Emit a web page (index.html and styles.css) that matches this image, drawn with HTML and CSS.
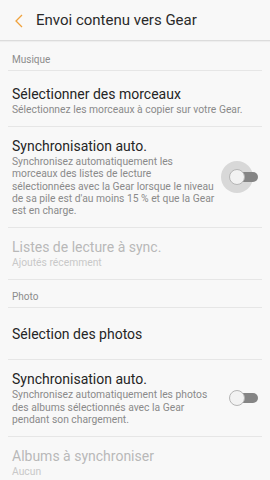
FILE: index.html
```html
<!DOCTYPE html>
<html lang="fr">
<head>
    <meta charset="UTF-8">
    <meta name="viewport" content="width=device-width, initial-scale=1.0">
    <title>Envoi contenu vers Gear</title>
    <link rel="stylesheet" href="styles.css">
</head>
<body>

<div class="header">
    <svg class="back" width="10" height="14" viewBox="0 0 10 14"><path d="M8 1 L2 7 L8 13" fill="none" stroke="#f0a23c" stroke-width="1.3"/></svg>
    <span class="title">Envoi contenu vers Gear</span>
</div>

<div class="list">
    <div class="category first">Musique</div>

    <div class="item first">
        <div class="item-title">Sélectionner des morceaux</div>
        <div class="item-sub">Sélectionnez les morceaux à copier sur votre Gear.</div>
    </div>

    <div class="item row">
        <div class="text">
            <div class="item-title">Synchronisation auto.</div>
            <div class="item-sub">Synchronisez automatiquement les morceaux des listes de lecture sélectionnées avec la Gear lorsque le niveau de sa pile est d'au moins 15 % et que la Gear est en charge.</div>
        </div>
        <div class="switch pressed"><span class="track"></span><span class="knob"></span></div>
    </div>

    <div class="item disabled">
        <div class="item-title">Listes de lecture à sync.</div>
        <div class="item-sub">Ajoutés récemment</div>
    </div>

    <div class="category">Photo</div>

    <div class="item single">
        <div class="item-title">Sélection des photos</div>
    </div>

    <div class="item row">
        <div class="text">
            <div class="item-title">Synchronisation auto.</div>
            <div class="item-sub">Synchronisez automatiquement les photos des albums sélectionnés avec la Gear pendant son chargement.</div>
        </div>
        <div class="switch"><span class="track"></span><span class="knob"></span></div>
    </div>

    <div class="item disabled last">
        <div class="item-title">Albums à synchroniser</div>
        <div class="item-sub">Aucun</div>
    </div>
</div>

</body>
</html>
```

FILE: styles.css
```css
body { margin: 0; background: #f8f8f8; font-family: Roboto, "Noto Sans", sans-serif; color: #252525; overflow: hidden; }

.header { height: 40px; display: flex; align-items: center; padding-left: 14px; border-bottom: 1px solid #dcdcdc; box-shadow: 0 1px 1px rgba(0,0,0,0.04); }
.back { margin-top: 1px; }
.title { font-size: 15px; margin-left: 12px; color: #2a2a2a; }

.list { padding: 0 8px; }
.category { font-size: 10px; line-height: 12px; color: #8c8c8c; padding: 11px 4px 4px; border-bottom: 1px solid #e6e6e6; }
.category.first { padding-top: 13px; }

.item { padding: 10px 4px; border-bottom: 1px solid #e6e6e6; }
.item.first { padding-top: 14px; }
.item.single { padding: 17px 4px 16px; }
.item.last { border-bottom: none; }
.item-title { font-size: 14px; line-height: 18px; }
.item-sub { font-size: 10.3px; line-height: 12.2px; color: #8a8a8a; margin-top: 1px; }

.item.disabled .item-title { color: #b8b8b8; }
.item.disabled .item-sub { color: #c8c8c8; }

.row { display: flex; align-items: center; }
.row .text { flex: 1; padding-right: 13px; }

/* interrupteur */
.switch { position: relative; width: 29px; height: 16px; flex-shrink: 0; }
.track { position: absolute; left: 4px; right: 0; top: 3px; height: 10px; border-radius: 5px; background: #858585; }
.knob { position: absolute; left: 0; top: 0; width: 14px; height: 14px; border-radius: 50%; background: #f2f2f2; border: 1px solid #b5b5b5; }
.switch.pressed::before { content: ""; position: absolute; left: -8px; top: -8px; width: 32px; height: 32px; border-radius: 50%; background: #d8d8d8; }
```
